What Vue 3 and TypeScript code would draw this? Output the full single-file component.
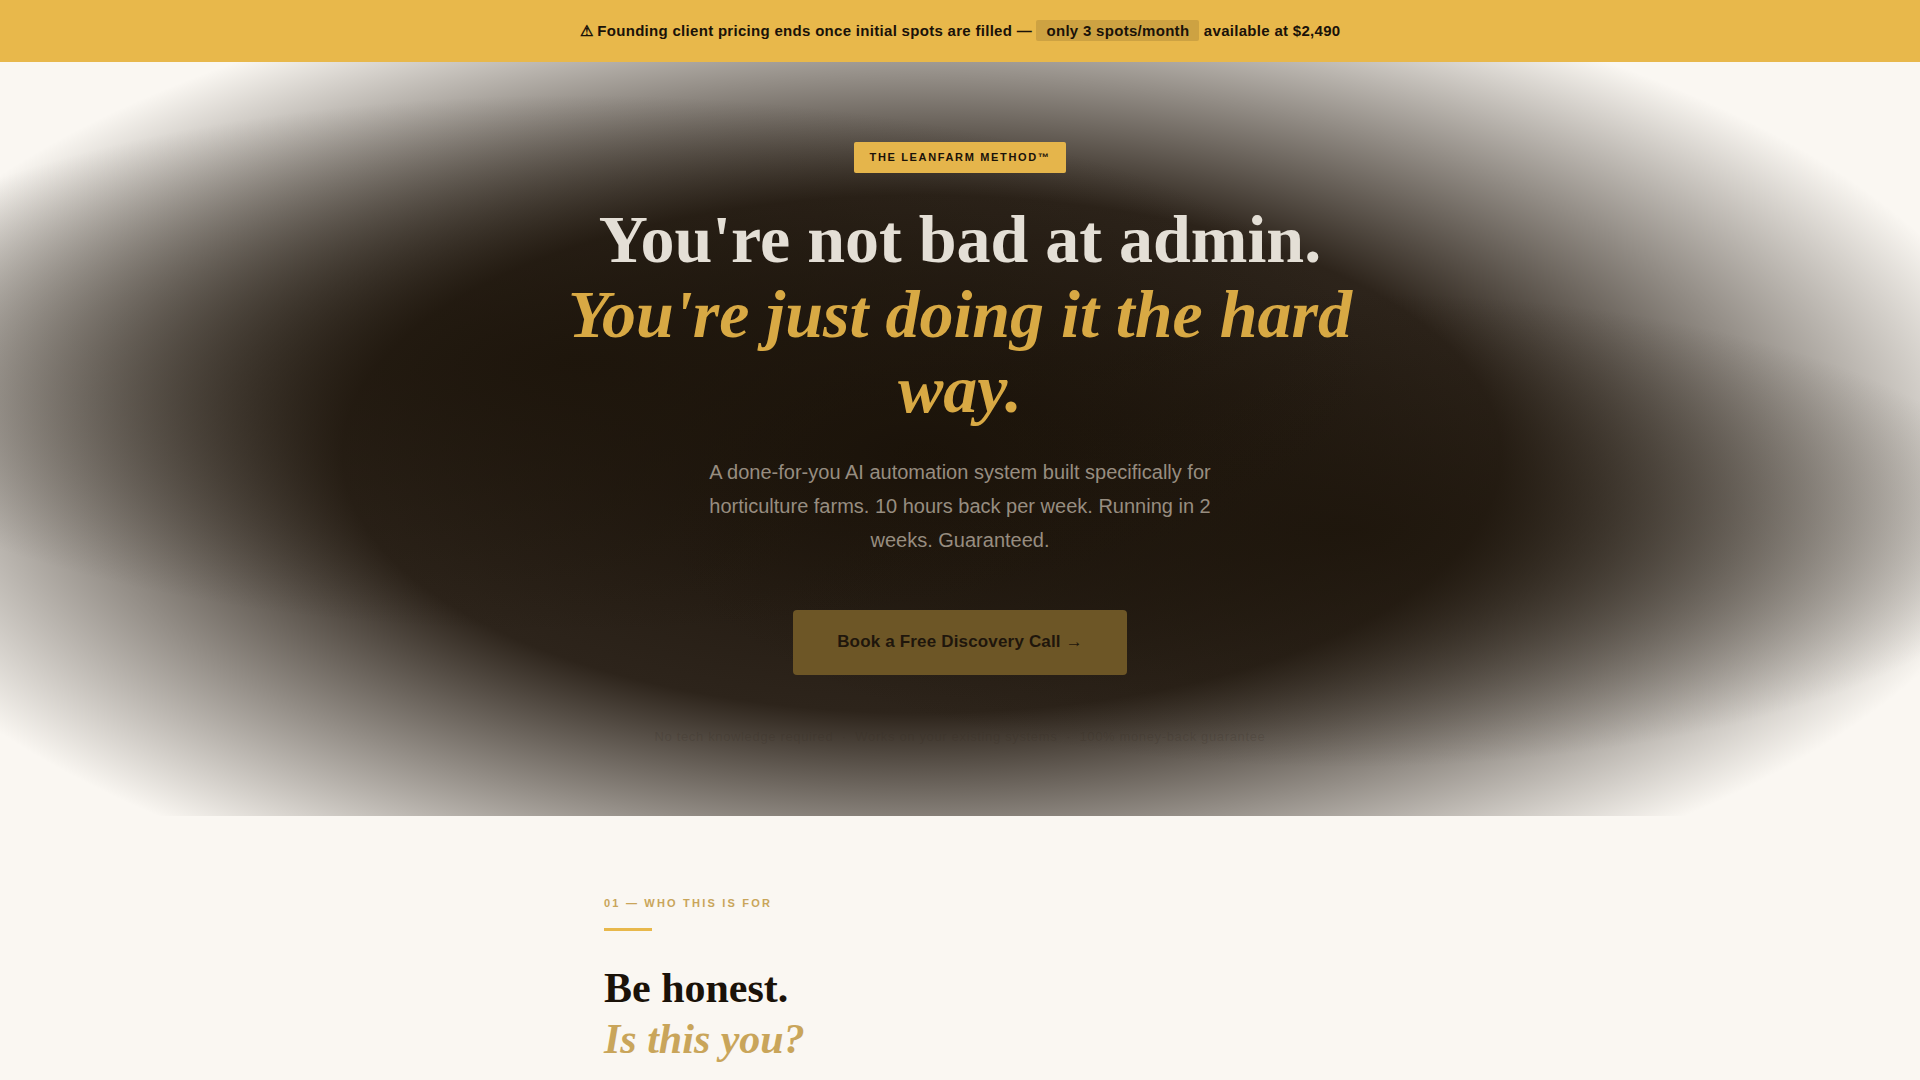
<script setup lang="ts">
const reassurances: string[] = [
  'No tech knowledge required',
  'Works on your existing systems',
  '100% money-back guarantee',
]
const reassuranceLine = reassurances.join(' \u00a0·\u00a0 ')
</script>

<template>
  <div class="page">
    <aside class="banner">
      ⚠ Founding client pricing ends once initial spots are filled —
      <span class="spots">only 3 spots/month</span> available at $2,490
    </aside>

    <header class="hero">
      <span class="badge">The LeanFarm Method™</span>
      <h1>You're not bad at admin.<br /><em>You're just doing it the hard way.</em></h1>
      <p class="lead">
        A done-for-you AI automation system built specifically for horticulture farms.
        10 hours back per week. Running in 2 weeks. Guaranteed.
      </p>
      <a class="cta" href="#book">Book a Free Discovery Call →</a>
      <p class="reassurance">{{ reassuranceLine }}</p>
    </header>

    <main class="section">
      <p class="label">01 — Who this is for</p>
      <div class="rule"></div>
      <h2>Be honest.<br /><em>Is this you?</em></h2>
    </main>
  </div>
</template>

<style>
body {
  margin: 0;
  background: #faf7f2;
}
</style>

<style scoped>
.page {
  color: #1a1209;
  font-family: "Liberation Sans", Arial, sans-serif;
}

.banner {
  padding: 18px 24px;
  background: #e8b84b;
  font-size: 15px;
  font-weight: 700;
  line-height: 26px;
  letter-spacing: 0.02em;
  text-align: center;
}

.spots {
  padding: 2px 10px;
  border-radius: 2px;
  background: rgba(26, 18, 9, 0.13);
}

.hero {
  display: flex;
  flex-direction: column;
  align-items: center;
  padding: 80px 24px 68px;
  background:
    radial-gradient(ellipse at 30% 40%, rgba(28, 20, 10, 0.85) 0%, transparent 42%),
    radial-gradient(ellipse at 70% 62%, rgba(28, 20, 10, 0.8) 0%, transparent 36%),
    radial-gradient(ellipse 58% 66% at 48% 52%, #1a1209 0%, #2d241b 52%, transparent 100%);
  text-align: center;
}

.badge {
  padding: 6px 16px;
  border-radius: 2px;
  background: #e5b54b;
  font-size: 11px;
  font-weight: 700;
  line-height: 19px;
  letter-spacing: 0.15em;
  text-transform: uppercase;
}

h1,
h2 {
  font-family: "Liberation Serif", "Times New Roman", serif;
  font-weight: 700;
}

h1 {
  max-width: 800px;
  margin: 29px 0 0;
  color: #e4dfd6;
  font-size: 68px;
  line-height: 75px;
}

h1 em {
  color: #d8a944;
}

.lead {
  max-width: 520px;
  margin: 28px 0 0;
  color: #978d80;
  font-size: 20px;
  line-height: 34px;
}

.cta {
  margin-top: 53px;
  padding: 17px 44px 19px;
  border-radius: 4px;
  background: #6d5626;
  color: #1f160c;
  font-size: 17px;
  font-weight: 700;
  line-height: 29px;
  letter-spacing: 0.01em;
  text-decoration: none;
}

.reassurance {
  margin: 51px 0 0;
  color: rgba(50, 41, 31, 0.2);
  font-size: 13px;
  line-height: 22px;
  letter-spacing: 0.05em;
}

.section {
  max-width: 712px;
  margin: 0 auto;
  padding: 78px 24px 15px;
}

.label {
  margin: 0;
  color: #c9a55a;
  font-size: 11px;
  font-weight: 700;
  line-height: 19px;
  letter-spacing: 0.2em;
  text-transform: uppercase;
}

.rule {
  width: 48px;
  height: 3px;
  margin: 15px 0 32px;
  background: #e8b84b;
}

h2 {
  margin: 0;
  font-size: 42px;
  line-height: 51px;
}

h2 em {
  color: #c9a55a;
}
</style>
